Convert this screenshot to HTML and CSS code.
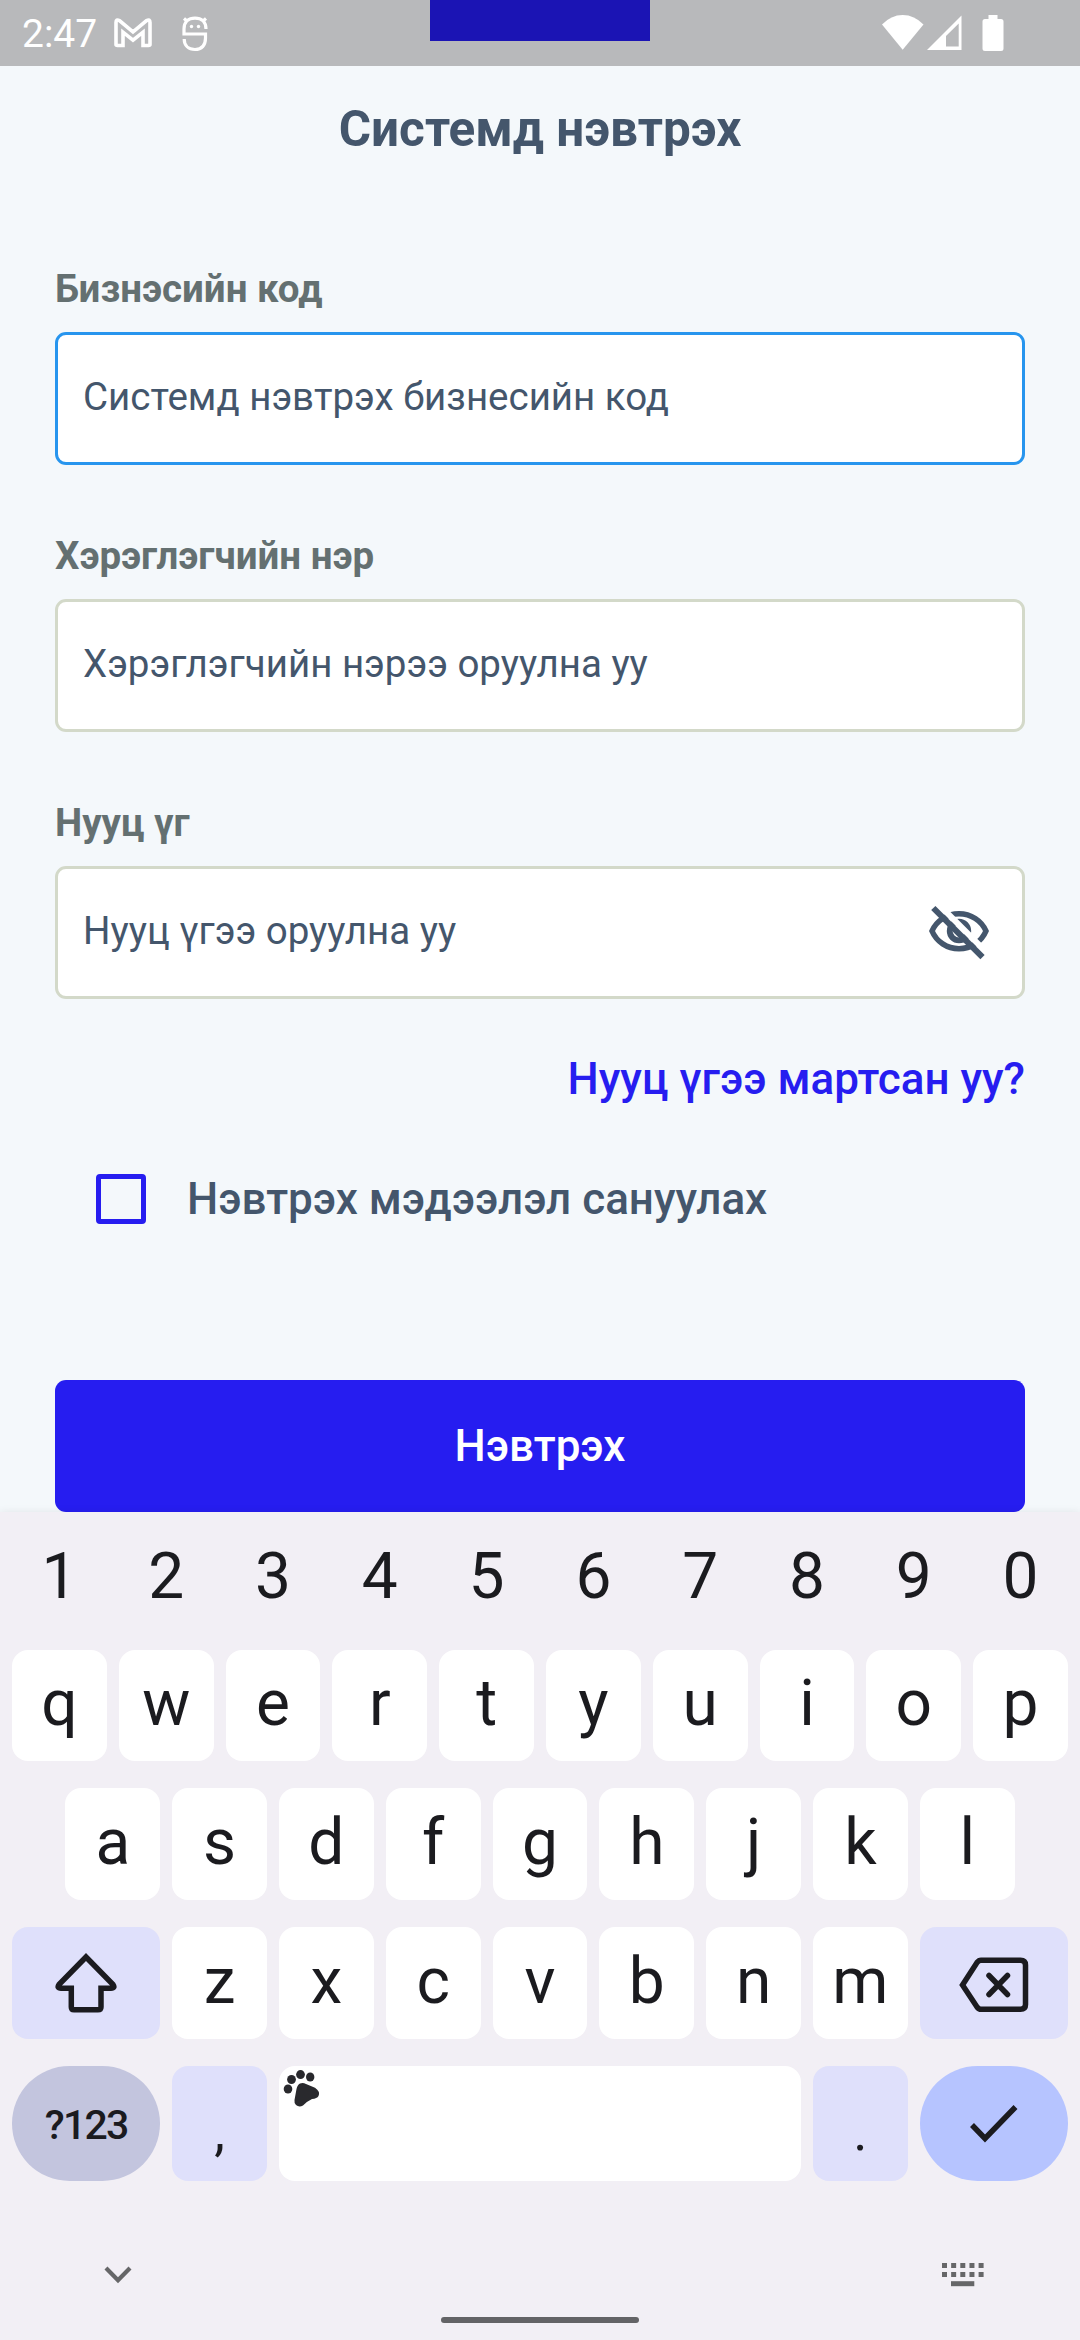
FILE: index.html
```html
<!DOCTYPE html>
<html lang="mn">
<head>
<meta charset="utf-8">
<title>Системд нэвтрэх</title>
<link rel="stylesheet" href="styles.css">
</head>
<body>
<header class="status">
  <span class="clock">2:47</span>
  <svg class="gmail" width="38" height="30" viewBox="0 0 38 30"><path d="M2 26.500V4.500Q2 .8 5.400 2.600L19 13.800 32.600 2.600Q36 .8 36 4.500V26.500Q36 27.500 34.500 27.500H29V14.200L19 22.200 9 14.200V27.500H3.500Q2 27.500 2 26.500Z" fill="none" stroke="#fff" stroke-width="3.600"/></svg>
  <svg class="face" width="26" height="36" viewBox="0 0 26 36"><g fill="none" stroke="#fff" stroke-width="3.200"><path d="M24 13C24 6 19.500 2.200 13 2.200S2 6 2 13V18H23.500V22C23.500 29.500 19.500 33.500 13 33.500S2.200 29.500 2.200 23"/><path d="M2 2.500 5 5M24 2.500 21 5"/></g><circle cx="9.500" cy="10.500" r="1.700" fill="#fff"/><circle cx="16.500" cy="10.500" r="1.700" fill="#fff"/></svg>
  <div class="cutout"></div>
  <div class="signals">
    <svg class="wifi" width="42" height="36" viewBox="0 0 42 36"><path d="M0 9.500Q9 0 20.700 0T41.500 9.500L20.700 34.800Z" fill="#fff"/></svg>
    <svg class="cell" width="36" height="36" viewBox="0 0 36 36"><path fill-rule="evenodd" d="M0 35 34.500 .5V35ZM19 31.500H31.700V8.500L19 21Z" fill="#fff"/></svg>
    <svg class="battery" width="22" height="36" viewBox="0 0 22 36"><path d="M6.500 0H15.500V4H19Q21.500 4 21.500 6.500V33.500Q21.500 36 19 36H3Q.5 36 .5 33.500V6.500Q.5 4 3 4H6.500Z" fill="#fff"/></svg>
  </div>
</header>

<main class="login">
  <h1 class="title">Системд нэвтрэх</h1>
  <div class="field">
    <label class="label">Бизнэсийн код</label>
    <div class="input focused"><span>Системд нэвтрэх бизнесийн код</span></div>
  </div>
  <div class="field">
    <label class="label">Хэрэглэгчийн нэр</label>
    <div class="input"><span>Хэрэглэгчийн нэрээ оруулна уу</span></div>
  </div>
  <div class="field">
    <label class="label">Нууц үг</label>
    <div class="input"><span>Нууц үгээ оруулна уу</span>
      <svg class="eye" width="66" height="66" viewBox="11 7.300 66 66"><g fill="none" stroke="#44566c"><path d="M17 40.300C21.500 30 32 23 44 23S66.500 30 71 40.300C66.500 51 56 58 44 58S21.500 51 17 40.300Z" stroke-width="5.500"/><circle cx="44" cy="40.300" r="9.300" stroke-width="5.800"/><path d="M22.300 12.500 72.300 62.500" stroke="#fff" stroke-width="6"/><path d="M18.300 17.300 67.500 66.500" stroke-width="6"/></g></svg>
    </div>
  </div>
  <a class="forgot">Нууц үгээ мартсан уу?</a>
  <div class="remember"><span class="box"></span><span>Нэвтрэх мэдээлэл сануулах</span></div>
  <button class="submit">Нэвтрэх</button>
</main>

<section class="keyboard">
  <div class="row digits"><span class="key">1</span><span class="key">2</span><span class="key">3</span><span class="key">4</span><span class="key">5</span><span class="key">6</span><span class="key">7</span><span class="key">8</span><span class="key">9</span><span class="key">0</span></div>
  <div class="row first"><span class="key">q</span><span class="key">w</span><span class="key">e</span><span class="key">r</span><span class="key">t</span><span class="key">y</span><span class="key">u</span><span class="key">i</span><span class="key">o</span><span class="key">p</span></div>
  <div class="row"><span class="key">a</span><span class="key">s</span><span class="key">d</span><span class="key">f</span><span class="key">g</span><span class="key">h</span><span class="key">j</span><span class="key">k</span><span class="key">l</span></div>
  <div class="row">
    <span class="key wide tint"><svg width="62" height="60" viewBox="0 0 62 60"><path d="M31 4 4 31.500Q1.500 35.200 6 35.200H16.300V54Q16.300 56.800 19 56.800H43Q46 56.800 46 54V35.200H56Q60.500 35.200 58 31.500Z" fill="none" stroke="#1b1b1f" stroke-width="5.500"/></svg></span>
    <span class="key">z</span><span class="key">x</span><span class="key">c</span><span class="key">v</span><span class="key">b</span><span class="key">n</span><span class="key">m</span>
    <span class="key wide tint"><svg class="del" width="70" height="56" viewBox="0 0 70 56"><g fill="none" stroke="#1b1b1f" stroke-width="5.500"><path d="M3.500 28 18 5.500Q19.800 3.200 22 3.200H61.500Q66.500 3.200 66.500 8V47.500Q66.500 52.300 61.500 52.300H22Q19.800 52.300 18 50Z"/><path d="M30 18.500 48.500 37.500M48.500 18.500 30 37.500" stroke-linecap="round"/></g></svg></span>
  </div>
  <div class="row last">
    <span class="key wide symbols">?123</span>
    <span class="key tint punct">,</span>
    <span class="key space"><svg width="38" height="38" viewBox="0 0 38 38"><g fill="#29292d"><ellipse cx="5" cy="19" rx="4.300" ry="4.600"/><ellipse cx="8.500" cy="9.500" rx="4.400" ry="4.500"/><ellipse cx="17.500" cy="4.600" rx="4.400" ry="4.500"/><ellipse cx="27.200" cy="7" rx="4.200" ry="4.600"/><path d="M17 13.500Q20 12.200 23 14L32 17.800Q37.500 21.500 35.500 26 34 28.500 29 29 24.500 31 20 35.500 16 37.500 13 35 11 33 11.500 30L13.500 19Q14.500 14.500 17 13.500Z"/></g></svg></span>
    <span class="key tint punct">.</span>
    <span class="key wide enter"><svg width="50" height="40" viewBox="0 0 50 40"><path d="M3 20 16 33.500 46.500 2" fill="none" stroke="#1b1b1f" stroke-width="5.500"/></svg></span>
  </div>
  <div class="tools">
    <svg width="28" height="18" viewBox="0 0 28 18"><path d="M2 2 14 14.200 26 2" fill="none" stroke="#666668" stroke-width="4.200"/></svg>
    <svg width="42" height="24" viewBox="0 0 42 24"><path d="M0 2.500H42M0 11.500H42" stroke="#666668" stroke-width="5" stroke-dasharray="5 4.150"/><path d="M9 20.700H32.300" stroke="#666668" stroke-width="5"/></svg>
  </div>
  <div class="home"></div>
</section>
</body>
</html>
```
FILE: styles.css
```css
* { box-sizing: border-box; }
body {
  margin: 0;
  width: 1080px;
  height: 2340px;
  display: flex;
  flex-direction: column;
  overflow: hidden;
  background: #f4f8fb;
  font-family: Roboto, "Noto Sans", sans-serif;
  color: #44566c;
}
svg { display: block; flex: none; }

.status {
  position: relative;
  height: 66px;
  flex: none;
  display: flex;
  align-items: flex-start;
  padding: 0 76px 0 22px;
  background: #b8b9bb;
  color: #fff;
}
.clock { width: 92px; font-size: 39px; line-height: 68px; }
.gmail { margin-top: 18px; }
.face { margin: 16px 0 0 30px; }
.cutout { position: absolute; left: 430px; top: 0; width: 220px; height: 41px; background: #1b14b4; }
.signals { margin-left: auto; padding-top: 15px; display: flex; }
.cell { margin-left: 3px; }
.battery { margin-left: 19px; }

.login {
  height: 1446px;
  flex: none;
  display: flex;
  flex-direction: column;
  padding: 0 55px;
}
.title { margin: 0 0 74px; font-size: 49.500px; font-weight: 700; line-height: 126px; text-align: center; }
.field { display: flex; flex-direction: column; gap: 20px; margin-bottom: 68px; }
.label { font-size: 38.500px; font-weight: 700; line-height: 46px; color: #647071; }
.input {
  height: 133px;
  display: flex;
  align-items: center;
  justify-content: space-between;
  padding: 0 30px 4px 25px;
  border: 3px solid #d3d9c9;
  border-radius: 11px;
  background: #fff;
  font-size: 38.500px;
}
.focused { border-color: #2795ee; }
.forgot { margin-top: -14px; font-size: 44px; font-weight: 500; line-height: 52px; text-align: right; color: #261df0; }
.remember {
  height: 50px;
  margin: 69px 0 156px;
  padding-left: 41px;
  display: flex;
  align-items: center;
  gap: 41px;
  font-size: 44px;
  font-weight: 500;
}
.box { width: 50px; height: 50px; border: 5.500px solid #261df0; border-radius: 4px; }
.submit {
  height: 132px;
  border: 0;
  border-radius: 11px;
  background: #261df0;
  color: #fff;
  font: 500 44px Roboto, "Noto Sans", sans-serif;
}

.keyboard {
  flex: 1;
  display: flex;
  flex-direction: column;
  gap: 27px;
  padding: 0 12px;
  background: #f2eff5;
  box-shadow: 0 0 8px rgba(0, 0, 0, .08);
  color: #1b1b1f;
}
.row { height: 112px; flex: none; display: flex; justify-content: center; gap: 12px; }
.first { height: 111px; }
.last { height: 115px; }
.key {
  width: 94.800px;
  flex: none;
  display: flex;
  align-items: center;
  justify-content: center;
  padding-bottom: 4px;
  border-radius: 16px;
  background: #fff;
  font-size: 64px;
  line-height: 75px;
}
.digits { height: 111px; }
.digits .key { background: none; padding: 17px 0 0; }
.wide { width: 148.200px; padding: 0; }
.tint { background: #dfe0fb; }
.del { margin-top: 3px; }
.symbols { padding-top: 3px; border-radius: 58px; background: #c3c5de; font-size: 41px; font-weight: 500; letter-spacing: -1.800px; }
.punct { padding: 16px 0 0; font-size: 54px; }
.space { flex: 1; align-items: flex-start; justify-content: flex-start; padding: 4px; }
.enter { padding-top: 2px; border-radius: 58px; background: #b6c4ff; }
.tools { height: 24px; display: flex; align-items: center; justify-content: space-between; margin-top: 55px; padding: 0 84px 0 92px; }
.home { width: 198px; height: 6px; margin: 3px auto 0; border-radius: 3px; background: #636366; }
```
